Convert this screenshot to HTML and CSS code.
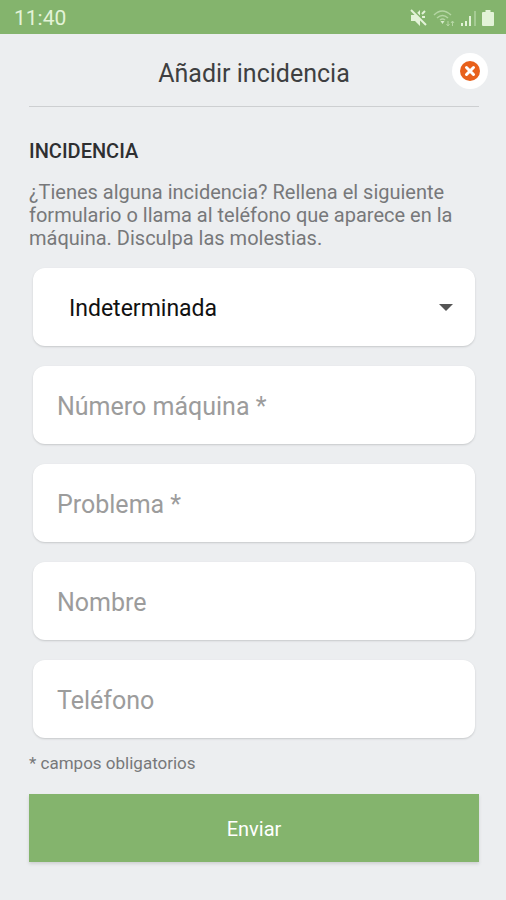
FILE: index.html
```html
<!DOCTYPE html>
<html lang="es">
<head>
<meta charset="utf-8">
<meta name="viewport" content="width=device-width, initial-scale=1">
<title>Añadir incidencia</title>
<link rel="stylesheet" href="styles.css">
</head>
<body>
<div class="status">
  <span>11:40</span>
  <div class="status-icons">
    <svg width="18" height="18" viewBox="0 0 18 18" aria-hidden="true">
      <path d="M1 6h4l5-5v16l-5-5H1z" fill="#e3f3d8"/>
      <path d="M12 5l3-3M12 8h3" stroke="#e3f3d8" stroke-width="2"/>
      <path d="M2 0l16 16" stroke="#84b46d" stroke-width="2"/>
      <path d="M1 1l15 15" stroke="#e3f3d8" stroke-width="2"/>
    </svg>
    <svg width="22" height="18" viewBox="0 0 22 18" fill="none" aria-hidden="true">
      <path d="M1 6q8-8 17 0M4 9q5.500-5 11 0M7 11q2.500-2 5 0" stroke="#b5d6a4" stroke-width="1.500"/>
      <path d="M7.500 12h4l-2 3z" fill="#d8ecce"/>
      <path d="M15 12v5M13.500 15l1.500 2 1.500-2M19.500 17v-5M18 14l1.500-2 1.500 2" stroke="#b5d6a4"/>
    </svg>
    <svg width="17" height="18" viewBox="0 0 17 18" aria-hidden="true">
      <path d="M1 14h2v3H1zM5 12h2v5H5zM9 7h2v10H9z" fill="#e3f3d8"/>
      <path d="M14 2h2v15h-2z" fill="#a5cb93"/>
    </svg>
    <svg width="12" height="18" viewBox="0 0 12 18" aria-hidden="true">
      <path d="M3.500 1h5v2H11q1 0 1 1v12q0 1-1 1H1q-1 0-1-1V4q0-1 1-1h2.500z" fill="#e3f3d8"/>
    </svg>
  </div>
</div>
<header class="header">
  <h1>Añadir incidencia</h1>
  <button class="close" type="button" aria-label="Cerrar">
    <svg width="20" height="20" viewBox="0 0 20 20" aria-hidden="true">
      <circle cx="10" cy="10" r="10" fill="#e8611c"/>
      <path d="M6.500 6.500l7 7M13.500 6.500l-7 7" stroke="#fff" stroke-width="3" stroke-linecap="round"/>
    </svg>
  </button>
</header>
<main>
  <h2>INCIDENCIA</h2>
  <p class="intro">¿Tienes alguna incidencia? Rellena el siguiente formulario o llama al teléfono que aparece en la máquina. Disculpa las molestias.</p>
  <form>
    <div class="fields">
      <div class="select-card">
        <select class="card" aria-label="Tipo de incidencia"><option>Indeterminada</option></select>
        <svg class="arrow" width="14" height="7" viewBox="0 0 14 7" aria-hidden="true"><path d="M0 0h14L7 7z" fill="#555"/></svg>
      </div>
      <input class="card" type="text" placeholder="Número máquina *" aria-label="Número máquina" required>
      <input class="card" type="text" placeholder="Problema *" aria-label="Problema" required>
      <input class="card" type="text" placeholder="Nombre" aria-label="Nombre">
      <input class="card" type="tel" placeholder="Teléfono" aria-label="Teléfono">
    </div>
    <p class="note">* campos obligatorios</p>
    <button class="submit" type="submit">Enviar</button>
  </form>
</main>
</body>
</html>
```
FILE: styles.css
```css
* { box-sizing: border-box; }

body {
  margin: 0;
  min-height: 100vh;
  background: #eceef0;
  font-family: Roboto, "Liberation Sans", sans-serif;
}

h1, h2, p { margin: 0; }

.status {
  display: flex;
  align-items: center;
  justify-content: space-between;
  height: 34px;
  padding: 2px 12px 0 14px;
  background: #84b46d;
  color: #e3f3d8;
  font-size: 21px;
}

.status-icons {
  display: flex;
  align-items: center;
  gap: 5px;
}

.header {
  position: relative;
  display: flex;
  align-items: center;
  justify-content: center;
  height: 73px;
  margin: 0 27px 0 29px;
  padding-top: 6px;
  border-bottom: 1px solid #cdcfd1;
}

.header h1 {
  color: #3e3f41;
  font-size: 25px;
  font-weight: 400;
}

.close {
  position: absolute;
  top: 19px;
  right: -9px;
  display: grid;
  place-items: center;
  width: 36px;
  height: 36px;
  padding: 0;
  border: 0;
  border-radius: 50%;
  background: #fff;
}

main { padding: 32px 27px 32px 29px; }

h2 {
  color: #2e2f31;
  font-size: 20px;
  font-weight: 500;
  line-height: 24px;
}

.intro {
  margin-top: 18px;
  color: #77787a;
  font-size: 20px;
  line-height: 23px;
}

.fields {
  display: grid;
  gap: 20px;
  margin-top: 18px;
  padding: 0 4px;
}

.select-card { position: relative; display: grid; }

.card {
  width: 100%;
  height: 78px;
  padding: 2px 24px 0;
  border: 0;
  border-radius: 12px;
  background: #fff;
  box-shadow: 0 1px 2px #c6c8ca;
  color: #111;
  font: 25px Roboto, "Liberation Sans", sans-serif;
}

.card::placeholder { color: #9c9c9c; opacity: 1; }

select.card {
  appearance: none;
  padding: 2px 36px 0;
  font-size: 23px;
}

.arrow {
  position: absolute;
  top: 36px;
  right: 22px;
  pointer-events: none;
}

.note {
  margin-top: 15px;
  color: #77787a;
  font-size: 17px;
  line-height: 20px;
}

.submit {
  width: 100%;
  height: 68px;
  margin-top: 21px;
  padding-top: 2px;
  border: 0;
  background: #84b46d;
  box-shadow: 0 2px 3px #cfd1d3;
  color: #fff;
  font: 20px Roboto, "Liberation Sans", sans-serif;
}
```
